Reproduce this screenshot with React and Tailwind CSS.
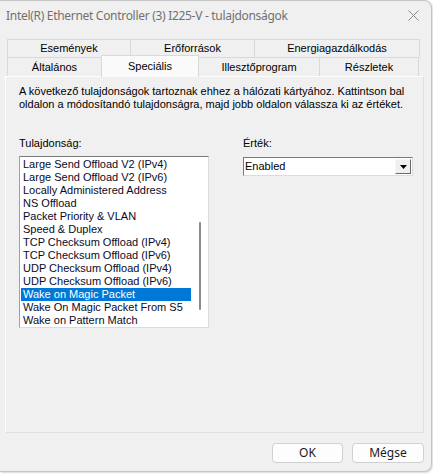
import React from "react";

const props = [
  "Large Send Offload V2 (IPv4)",
  "Large Send Offload V2 (IPv6)",
  "Locally Administered Address",
  "NS Offload",
  "Packet Priority & VLAN",
  "Speed & Duplex",
  "TCP Checksum Offload (IPv4)",
  "TCP Checksum Offload (IPv6)",
  "UDP Checksum Offload (IPv4)",
  "UDP Checksum Offload (IPv6)",
  "Wake on Magic Packet",
  "Wake On Magic Packet From S5",
  "Wake on Pattern Match",
];

const topTabs = [
  { label: "Események", w: "w-[124px]" },
  { label: "Erőforrások", w: "w-[125px]" },
  { label: "Energiagazdálkodás", w: "w-[166px]" },
];

const bottomTabs = [
  { label: "Általános", w: "w-[95px]" },
  { label: "Speciális", w: "w-[98px]", active: true },
  { label: "Illesztőprogram", w: "w-[122px]" },
  { label: "Részletek", w: "w-[100px]" },
];

export default function App() {
  const selected = "Wake on Magic Packet";

  return (
    <div className="w-[433px] h-[474px] bg-white overflow-hidden">
      <div className="w-[432px] h-[472px] bg-[#f0f0f0] border-t border-r border-b border-[#c4c4c4] rounded-tr-[8px] rounded-br-[8px] shadow-[1px_1px_2px_rgba(0,0,0,0.15)] flex flex-col font-['Liberation_Sans',Arial,sans-serif] text-[11px] text-black">
        {/* title bar */}
        <div className="h-[29px] flex items-center justify-between pl-[6px] pr-[12px]">
          <span className="font-['Noto_Sans',sans-serif] text-[12px] text-[#707070] tracking-[-0.3px]">
            Intel(R) Ethernet Controller (3) I225-V - tulajdonságok
          </span>
          <svg width="11" height="11" viewBox="0 0 11 11" className="text-[#8a8a8a]">
            <path d="M0.5 0.5 L10.5 10.5 M10.5 0.5 L0.5 10.5" stroke="currentColor" strokeWidth="1" />
          </svg>
        </div>

        {/* tabs */}
        <div className="mt-[9px] ml-[5px] w-[419px] flex flex-col">
          <div className="flex px-[2px] h-[18px]">
            {topTabs.map((t) => (
              <div
                key={t.label}
                className={`${t.w} flex items-center justify-center border-t border-l border-r border-[#d9d9d9] bg-[#f0f0f0] -mr-px`}
              >
                {t.label}
              </div>
            ))}
          </div>
          <div className="flex px-[2px] h-[19px]">
            {bottomTabs.map((t) =>
              t.active ? (
                <div
                  key={t.label}
                  className={`${t.w} relative z-10 -mt-[2px] h-[22px] flex justify-center pt-[2px] border-t border-l border-r border-[#d9d9d9] bg-[#fafafa] -mr-px`}
                >
                  {t.label}
                </div>
              ) : (
                <div
                  key={t.label}
                  className={`${t.w} flex items-center justify-center border-t border-l border-r border-[#d9d9d9] bg-[#f0f0f0] -mr-px`}
                >
                  {t.label}
                </div>
              )
            )}
          </div>

          {/* panel */}
          <div className="h-[357px] border border-[#e0e0e0] border-l-white border-t-white bg-[#f0f0f0] pl-[13px] pr-[10px] pt-[8px]">
            <p className="leading-[13px]">
              A következő tulajdonságok tartoznak ehhez a hálózati kártyához. Kattintson bal oldalon a módosítandó
              tulajdonságra, majd jobb oldalon válassza ki az értéket.
            </p>

            <div className="flex mt-[26px] gap-[34px]">
              <div className="w-[190px] flex flex-col">
                <div className="leading-[13px]">Tulajdonság:</div>
                <div className="mt-[6px] h-[172px] bg-white border border-[#dcdcdc] border-t-[#7a7a7a] border-l-[#a0a0a0] flex">
                  <div className="w-[171px] pt-[1px] pl-[1px] flex flex-col overflow-hidden">
                    {props.map((p) =>
                      p === selected ? (
                        <div key={p} className="h-[13px] leading-[13px] pl-[2px] bg-[#0078d7] text-white whitespace-nowrap">
                          {p}
                        </div>
                      ) : (
                        <div key={p} className="h-[13px] leading-[13px] pl-[2px] whitespace-nowrap text-[#0a0a28]">
                          {p}
                        </div>
                      )
                    )}
                  </div>
                  <div className="flex-1 pt-[65px] flex justify-center">
                    <div className="w-[2px] h-[88px] bg-[#8a8a8a] rounded-full" />
                  </div>
                </div>
              </div>

              <div className="w-[170px] flex flex-col">
                <div className="leading-[13px]">Érték:</div>
                <div className="mt-[7px] h-[19px] bg-white border border-[#dcdcdc] border-t-[#7a7a7a] border-l-[#7a7a7a] flex items-center justify-between pl-[1px] pr-[1px]">
                  <span className="leading-[13px]">Enabled</span>
                  <div className="w-[16px] h-[15px] bg-[#f0f0f0] border border-[#f8f8f8] border-r-[#6a6a6a] border-b-[#6a6a6a] flex items-center justify-center">
                    <svg width="7" height="4" viewBox="0 0 7 4">
                      <path d="M0 0 H7 L3.5 4 Z" fill="#000" />
                    </svg>
                  </div>
                </div>
              </div>
            </div>
          </div>
        </div>

        {/* buttons */}
        <div className="mt-[10px] flex justify-end gap-[9px] pr-[7px]">
          <button className="w-[71px] h-[20px] bg-[#fdfdfd] border border-[#d0d0d0] rounded-[4px] font-['Noto_Sans',sans-serif] text-[12px] text-[#1a1a1a] leading-none">
            OK
          </button>
          <button className="w-[72px] h-[20px] bg-[#fdfdfd] border border-[#d0d0d0] rounded-[4px] font-['Noto_Sans',sans-serif] text-[12px] text-[#1a1a1a] leading-none">
            Mégse
          </button>
        </div>
      </div>
    </div>
  );
}
